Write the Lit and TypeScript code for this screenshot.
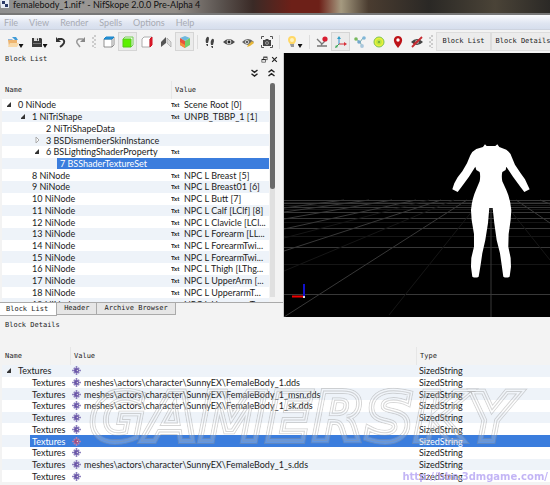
import { LitElement, html, css, svg } from "lit";
import { customElement, property, state } from "lit/decorators.js";
import { classMap } from "lit/directives/class-map.js";

type Glyph = ReturnType<typeof svg>;

const ICONS: Record<string, Glyph> = {
  open: svg`<path d="M1 5V3h4l1 1h3v2z" fill="#8fb4d8"/><path d="M1 4h9v7H2z" fill="#eeb570"/><path d="M3 7h9l-2 4H1z" fill="#f8d9a8"/><path d="M5 1h4l2 3H8z" fill="#3f9bd8"/>`,
  save: svg`<path d="M1 2h9l1 1v8H1z" fill="#3a3a3a"/><path d="M3 2h5v3H3z" fill="#ddd"/><path d="M6 2.500h1v2H6z" fill="#333"/><path d="M2 7h8v1H2z" fill="#777"/>`,
  undo: svg`<path d="M3 3h4q3 1 2 4-1 2-4 4" fill="none" stroke="#333" stroke-width="1.800"/><path d="M1 1v5h5z" fill="#333"/>`,
  redo: svg`<path d="M9 3H5Q2 4 3 7l3 4" fill="none" stroke="#999" stroke-width="1.500"/><path d="M11 1v5H6z" fill="#888"/>`,
  top: svg`<path d="M1 3h8v8H1zM9 3l2-2v8l-2 2" fill="#fff" stroke="#777" stroke-width=".8"/><path d="M1 3l2-2h8L9 3z" fill="#2a96dc" stroke="#1783c8"/>`,
  front: svg`<path d="M1 3l2-2h8v8l-2 2z" fill="#e8ffdf" stroke="#7bc95b"/><path d="M1 3h8v8H1z" fill="#5cf000" stroke="#54c91a"/>`,
  side: svg`<path d="M1 3l2-2h8L9 3v8H1z" fill="#fff" stroke="#999" stroke-width=".8"/><path d="M9 3l2-2v8l-2 2z" fill="#e01b2d" stroke="#d01020"/>`,
  flip: svg`<path d="M1 6l5-5v6l-5 4z" fill="#555"/><path d="M7 2l4 4v5L7 7z" fill="#ddd" stroke="#999" stroke-width=".6"/>`,
  cube: svg`<path d="M6 0l5 2-5 3-5-3z" fill="#6db9df"/><path d="M1 2l5 3v7l-5-3z" fill="#e8523b"/><path d="M11 2L6 5v7l5-3z" fill="#72cf68"/><path d="M1 6l5 3v3l-5-3z" fill="#f4903c"/>`,
  steps: svg`<path d="M3 1q2-1 2 2L4 7H2Q1 3 3 1zM2 8h2v2H3zM8 3q2-1 2 2L9 9H7Q6 5 8 3zM7 10h2v2H8z" fill="#444"/>`,
  eye: svg`<path d="M0 6q6-6 12 0-6 6-12 0z" fill="#4b4b4b"/><circle cx="6" cy="6" r="2.400" fill="#ddd"/><circle cx="6" cy="6" r="1.400" fill="#222"/>`,
  eyeEdit: svg`<path d="M0 6q6-6 12 0-6 6-12 0z" fill="#666"/><circle cx="5" cy="6" r="2" fill="#ddd"/><circle cx="5" cy="6" r="1" fill="#333"/><path d="M6 9l4-4 2 2-4 3-3 1z" fill="#e8b83a"/>`,
  camera: svg`<path d="M.5 3V.5H3M9 .5h2.500V3M11.500 9v2.500H9M3 11.500H.5V9" fill="none" stroke="#555"/><path d="M2 4h2l1-1h2l1 1h2v6H2z" fill="#444"/><circle cx="6" cy="7" r="1.800" fill="#bbb"/><circle cx="6" cy="7" r="1" fill="#444"/>`,
  bulb: svg`<path d="M6 0q4 0 4 4 0 2-2 4H4Q2 6 2 4q0-4 4-4z" fill="#ffd867"/><circle cx="6" cy="4" r="2" fill="#fff3bd"/><path d="M4 8h4v3H5z" fill="#999"/>`,
  angle: svg`<path d="M1 3l5 5M1 10h10M5 9l4-4" fill="none" stroke="#777" stroke-width="1.300"/><circle cx="9" cy="3" r="2.600" fill="#d81e32"/>`,
  axes: svg`<path d="M4 8V2" stroke="#2f8fd6"/><path d="M4 8h6" stroke="#d72f38"/><path d="M4 8l-3 3" stroke="#3aa757"/><path d="M2 3l2-3 2 3z" fill="#2f9fc6"/><path d="M9 6l3 2-3 2z" fill="#d72f38"/><path d="M0 12l1-3 2 2z" fill="#3aa757"/>`,
  nodes: svg`<path d="M2 3l4 3 3-4M6 6l2 4" stroke="#7aa" fill="none"/><circle cx="2" cy="3" r="1.800" fill="#78b95e"/><circle cx="10" cy="2" r="1.800" fill="#7fb6d8"/><circle cx="5" cy="6" r="1.800" fill="#72a8cb"/><circle cx="8" cy="10" r="1.900" fill="#a9c7dc"/>`,
  disc: svg`<circle cx="6" cy="6" r="5" fill="#e8ef3c" stroke="#7cc552"/><circle cx="6" cy="6" r="2.800" fill="#b8e640"/><circle cx="6" cy="6" r=".8" fill="#386b38"/>`,
  pin: svg`<path d="M6 12Q1 6 2 3q1-3 4-3t4 3q1 3-4 9z" fill="#bd1217"/><circle cx="6" cy="4" r="1.700" fill="#fff"/>`,
  hidden: svg`<path d="M0 6q6-6 12 0-6 6-12 0z" fill="#444"/><circle cx="6" cy="6" r="2" fill="#aaa"/><path d="M1 11L11 1" stroke="#c52b32" stroke-width="1.800"/><path d="M2 8l7-5" stroke="#c52b32"/>`,
  down: svg`<path d="M2 2l4 3 4-3M2 7l4 3 4-3" fill="none" stroke="#222" stroke-width="2"/>`,
  up: svg`<path d="M2 5l4-3 4 3M2 10l4-3 4 3" fill="none" stroke="#222" stroke-width="2"/>`,
  float: svg`<path d="M4 1h7v6H4z" fill="#222"/><path d="M5 3h5v3H5z" fill="#f3f3f3"/><path d="M1 5h7v6H1z" fill="#222"/><path d="M2 7h5v3H2z" fill="#f3f3f3"/>`,
  close: svg`<path d="M2 2l8 8M10 2l-8 8" stroke="#222" stroke-width="2"/>`,
};

const icon = (name: string, cls = "icon") =>
  html`<svg class=${cls} viewBox="0 0 12 12" aria-hidden="true">${ICONS[name]}</svg>`;

const sharedStyles = css`
  * { box-sizing: border-box; }
  button { margin: 0; padding: 0; border: 0; background: none; color: inherit; font: inherit; }
  table { display: block; border-spacing: 0; }
  thead { display: block; }
  tbody { display: grid; grid-auto-rows: 1fr; }
  th, td { padding: 0; min-width: 0; font-weight: 400; text-align: left; white-space: nowrap; }
  tr { display: grid; align-items: center; }
  thead tr { height: 18px; }
  th { padding-left: 3px; border-left: 1px solid #e6e6e6; font: 7px/18px "DejaVu Sans Mono", monospace; color: #222; }
  th:first-child { border-left: 0; }
  td { line-height: 11px; }
  tbody tr { background: #fff; }
  .arrow { display: inline-block; width: 13px; vertical-align: top; }
  .arrow svg { display: block; width: 5px; height: 11px; margin-left: 2px; }
`;

interface Block { id: string; type: string; depth: number; value?: string; arrow?: "open" | "closed"; }

const BLOCKS: Block[] = [
  { id: "0", type: "NiNode", depth: 0, value: "Scene Root [0]", arrow: "open" },
  { id: "1", type: "NiTriShape", depth: 1, value: "UNPB_TBBP_1 [1]", arrow: "open" },
  { id: "2", type: "NiTriShapeData", depth: 2 },
  { id: "3", type: "BSDismemberSkinInstance", depth: 2, arrow: "closed" },
  { id: "6", type: "BSLightingShaderProperty", depth: 2, value: "", arrow: "open" },
  { id: "7", type: "BSShaderTextureSet", depth: 3 },
  ...[
    "Breast [5]", "Breast01 [6]", "Butt [7]", "Calf [LClf] [8]", "Clavicle [LCl...", "Forearm [LL...",
    "ForearmTwi...", "ForearmTwi...", "Thigh [LThg...", "UpperArm [...", "UpperarmT...", "UpperarmT...",
  ].map((name, i) => ({ id: String(i + 8), type: "NiNode", depth: 1, value: `NPC L ${name}` })),
];

const arrowGlyph = (kind?: "open" | "closed") => html`<span class="arrow">${
  kind === "open"
    ? html`<svg viewBox="0 0 5 11"><path d="M4 3v5H0V7z" fill="#333"/></svg>`
    : kind === "closed"
      ? html`<svg viewBox="0 0 5 11"><path d="M1 2l3 3-3 3z" fill="#fff" stroke="#aaa"/></svg>`
      : ""
}</span>`;

@customElement("block-list")
export class BlockList extends LitElement {
  @state() private selected = "7";

  static styles = [sharedStyles, css`
    :host { display: flex; flex-direction: column; min-width: 0; background: #f3f3f3; }
    .caption { display: flex; align-items: center; gap: 3px; height: 12px; padding: 0 5px; }
    h2 { flex: 1; margin: 0; font: 7px/12px "DejaVu Sans Mono", monospace; }
    .mini { display: block; width: 7px; height: 7px; }
    .tools { display: flex; justify-content: flex-end; align-items: center; gap: 8px; height: 16px; padding-right: 7px; }
    .tools svg { display: block; width: 9px; height: 10px; }
    .body { display: flex; flex: 1; min-height: 0; }
    table { flex: 1; min-width: 0; overflow: hidden; height: 222px; }
    tbody { height: 211px; }
    tr { grid-template-columns: 169px 1fr; margin-left: 2px; }
    tbody tr:nth-child(even) { background: #eef3f9; }
    td { overflow: hidden; }
    .d1 { padding-left: 14px; }
    .d2 { padding-left: 28px; }
    .d3 { padding-left: 42px; }
    .first { padding-left: 3px; }
    .indent { display: block; }
    tr.selected { background: linear-gradient(90deg, #eef3f9 55px, #3b7ddd 55px) !important; color: #fff; }
    .txt { display: inline-block; width: 13px; font-size: 6px; font-weight: 700; color: #222; vertical-align: top; }
    .scroll { width: 7px; margin: 1px 7px 4px 0; background: #e0e0e0; border: 1px solid #f3f3f3; }
    .thumb { height: 106px; border-radius: 3px; background: #6a6a6a; }
    .tabs { display: flex; height: 15px; border-top: 1px solid #aaa; }
    .tabs button { height: 12px; padding: 0 7px; border: 1px solid #aaa; border-width: 0 1px 1px 0; font: 7px/11px "DejaVu Sans Mono", monospace; background: #e6e6e6; }
    .tabs .active { height: 13px; padding: 0 8px 0 6px; background: #fff; }
  `];

  render() {
    return html`
      <div class="caption"><h2>Block List</h2>
        <button aria-label="Float">${icon("float", "mini")}</button>
        <button aria-label="Close">${icon("close", "mini")}</button>
      </div>
      <div class="tools">
        <button aria-label="Expand all">${icon("down")}</button>
        <button aria-label="Collapse all">${icon("up")}</button>
      </div>
      <div class="body">
        <table>
          <thead><tr><th>Name</th><th>Value</th></tr></thead>
          <tbody>${BLOCKS.map(b => html`
            <tr class=${classMap({ selected: b.id === this.selected })} @click=${() => (this.selected = b.id)}>
              <td class="first"><span class="indent d${b.depth}">${arrowGlyph(b.arrow)}${b.id} ${b.type}</span></td>
              <td>${b.value === undefined ? "" : html`<span class="txt">Txt</span>${b.value}`}</td>
            </tr>`)}</tbody>
        </table>
        <div class="scroll"><div class="thumb"></div></div>
      </div>
      <div class="tabs" role="tablist">
        <button role="tab" class="active" aria-selected="true">Block List</button>
        <button role="tab">Header</button>
        <button role="tab">Archive Browser</button>
      </div>`;
  }
}

@customElement("scene-view")
export class SceneView extends LitElement {
  static styles = css`
    :host { display: block; min-width: 0; background: #000; }
    svg { display: block; width: 100%; height: 100%; }
  `;
  render() {
    return html`<svg viewBox="0 0 266 264" preserveAspectRatio="xMinYMin slice" role="img" aria-label="Body mesh on a ground grid">
      <g fill="none" stroke="#383838">
        <path d="M0 147.500h266M0 150.500h266M0 154.500h266M0 159.500h266M0 165.500h266M0 175.500h266M0 194.500h266M0 241.500h266"/>
        <path stroke="#161616" d="M0 149.500h266M0 152.500h266M0 156.500h266M0 169.500h266M0 183.500h266M0 211.500h266"/>
        <path d="M0 264L183 147M0 198L157 147M0 176L132 147M0 166L108 147M0 159L85 147M0 155L60 147M232 147l34 23M256 147l10 4"/>
        <path stroke="#161616" d="M105 262L197 147M0 218L170 147M0 185L145 147M218 147l48 60"/>
        <path d="M207 147v117"/>
      </g>
      <path transform="translate(1 77) scale(.3333)" fill="#fff" d="M600 43L605 48H631L637 43L643 51L664 59Q676 67 680 80L690 104L706 128L720 148L734 178L718 186L706 170L684 140L664 110L662 120L652 126Q649 138 652 154L664 180Q676 206 679 240L677 270L671 312L670 350L677 384L678 410L674 440Q664 445 655 440L650 404L645 370L635 330L628 280L623 234H613L609 280L601 330L592 370L587 404L581 440Q572 445 562 440L558 410L559 384L567 350L567 312L560 270L558 240Q561 206 573 180L584 154Q587 138 584 126L574 120L571 110L552 140L530 170L518 186L502 178L508 160L518 142L532 124L546 100L556 76Q562 63 574 57L594 51Z"/>
      <path d="M8 243.500h12" stroke="#e00" stroke-width="2"/><path d="M20 231v12" stroke="#11c" stroke-width="2"/><path d="M19 243h2v2h-2z" fill="#ddd"/>
    </svg>`;
  }
}

const TEXTURES = [
  "", "meshes\\actors\\character\\SunnyEX\\FemaleBody_1.dds", "meshes\\actors\\character\\SunnyEX\\FemaleBody_1_msn.dds",
  "meshes\\actors\\character\\SunnyEX\\FemaleBody_1_sk.dds", "", "", "", "",
  "meshes\\actors\\character\\SunnyEX\\FemaleBody_1_s.dds", "",
];

@customElement("block-details")
export class BlockDetails extends LitElement {
  @property({ type: Number }) selected = 6;

  static styles = [sharedStyles, css`
    :host { display: block; position: relative; background: #f3f3f3; overflow: hidden; }
    h2 { margin: 0; height: 30px; padding-left: 5px; font: 7px/17px "DejaVu Sans Mono", monospace; }
    tbody { height: 117px; }
    thead tr { grid-template-columns: 70px 1fr 134px; }
    th:first-child { padding-left: 5px; }
    tbody tr { margin-left: 2px; grid-template-columns: 68px 1fr 134px; }
    tbody tr:nth-child(odd) { background: #eef3f9; }
    tr.selected { background: linear-gradient(90deg, #eef3f9 28px, #3b7ddd 28px) !important; color: #fff; }
    td:first-child { padding-left: 30px; }
    tr:first-child td:first-child { padding-left: 3px; }
    td:last-child { padding-left: 3px; }
    .value { display: flex; align-items: center; gap: 3px; padding-left: 2px; }
    .flower { flex: none; width: 9px; height: 9px; }
    .brand, .site { position: absolute; pointer-events: none; }
    .brand { left: 85px; top: 70px; width: 450px; height: 64px; overflow: visible; }
    .brand text { font: italic 700 68px "DejaVu Sans", sans-serif; }
    .brand use { fill: none; stroke: #fff; stroke-width: 6; }
    .brand .hide { stroke: #000; stroke-width: 4; }
    .brand .core { stroke-width: 1; }
    .brand .haze { stroke-opacity: .2; stroke-width: 4; }
    .brand .ink { stroke: #999; stroke-opacity: .4; }
    .site { right: 2px; bottom: 2px; font: 700 10px/13px "DejaVu Sans", sans-serif; color: #b9a9f4; opacity: .85; text-decoration: none; pointer-events: auto; }
  `];

  render() {
    return html`
      <h2>Block Details</h2>
      <table>
        <thead><tr><th>Name</th><th>Value</th><th>Type</th></tr></thead>
        <tbody>${TEXTURES.map((path, i) => html`
          <tr class=${classMap({ selected: i === this.selected })} @click=${() => (this.selected = i)}>
            <td>${i === 0 ? arrowGlyph("open") : ""}Textures</td>
            <td class="value">
              <svg class="flower" viewBox="0 0 10 10" aria-hidden="true">
                <path d="M5 0v10M0 5h10M2 2l6 6M8 2L2 8" stroke=${i === this.selected ? "#b57fae" : "#8b80bd"} stroke-width="1.800"/>
                <circle cx="5" cy="5" r="2.600" fill=${i === this.selected ? "#9c4d84" : "#6a55a8"}/><circle cx="6" cy="5" r=".8" fill="#ddd"/>
              </svg>${path}</td>
            <td>SizedString</td>
          </tr>`)}</tbody>
      </table>
      <svg class="brand" viewBox="0 0 450 64" aria-hidden="true">
        <defs><text id="name" x="5" y="54">GAMERSKY</text></defs>
        <mask id="rim" maskUnits="userSpaceOnUse" x="-10" y="-10" width="480" height="90">
          <use href="#name"/><use class="hide" href="#name"/><use class="core" href="#name"/>
        </mask>
        <use class="haze" href="#name"/>
        <g mask="url(#rim)"><use class="ink" href="#name"/></g>
      </svg>
      <a class="site" href="http://bbs.3dmgame.com/">http://bbs.3dmgame.com/</a>`;
  }
}

@customElement("app-root")
export class AppRoot extends LitElement {
  static styles = [sharedStyles, css`
    :host { display: flex; flex-direction: column; min-height: 100vh; overflow: hidden; background: #f3f3f3; color: #1c1c1c; font: 9px/11px Lato, "Open Sans", sans-serif; }
    .title { display: flex; align-items: flex-start; gap: 3px; height: 15px; border-bottom: 2px solid #777; color: #111;
      background: linear-gradient(90deg, #8e8e8e 0, #9a9896 12%, #928d88 32%, #5b5450 40%, #3a2a26 46%, #6d2018 53%, #6d2018 58%, #a59a80 62%, #4a3c30 67%, #2a2825 78%, #4a4337 90%, #2b2926 100%); }
    .title svg { width: 10px; height: 9px; }
    h1 { margin: 0; font: 9px/9px Lato, "Open Sans", sans-serif; }
    nav { display: flex; align-items: center; gap: 11px; height: 15px; padding: 0 4px; color: #a8abb3; background: linear-gradient(#fafbfe, #dfe5f1 60%, #d6deed); border-bottom: 1px solid #cdd3df; }
    .toolbar { display: flex; align-items: center; height: 23px; padding: 1px 0 1px 3px; overflow: hidden; }
    .toolbar button { display: flex; flex: none; align-items: center; justify-content: center; width: 19px; height: 19px; border: 1px solid transparent; }
    .toolbar .on { border-color: #d5d5d5; background: #ebebeb; }
    .toolbar .menu { width: 24px; }
    .toolbar .text { width: 55px; border-color: #ddd; background: #ececec; font: 7px/11px "DejaVu Sans Mono", monospace; }
    .toolbar .wide { width: 64px; }
    .icon { width: 12px; height: 12px; }
    .caret { align-self: flex-end; width: 5px; height: 4px; margin-bottom: 2px; background: #111; clip-path: polygon(0 0, 100% 0, 50% 100%); }
    .grip { flex: none; width: 4px; height: 13px; margin: 0 3px; background: repeating-conic-gradient(#ccc 0 25%, #f3f3f3 0 50%) 0 0 / 4px 4px; }
    .sep { flex: none; width: 1px; height: 14px; margin: 0 2px 0 3px; background: #ddd; }
    main { display: grid; grid-template-columns: 284fr 266fr; height: 264px; }
    block-list { min-height: 0; border-right: 1px solid #ccc; }
    block-details { flex: 1; }
  `];

  private tool(name: string, label: string, on = false, menu = false) {
    return html`<button aria-label=${label} class=${classMap({ on, menu })}>${icon(name)}${menu ? html`<span class="caret"></span>` : ""}</button>`;
  }

  render() {
    return html`
      <header class="title">
        <svg viewBox="0 0 10 9" aria-hidden="true"><path d="M0 0h9v8H1z" fill="#e8ecf3"/><path d="M2 1h3v3H2zM5 4h3v3H5z" fill="#2b3a66"/></svg>
        <h1>femalebody_1.nif* - NifSkope 2.0.0 Pre-Alpha 4</h1>
      </header>
      <nav>${["File", "View", "Render", "Spells", "Options", "Help"].map(m => html`<button>${m}</button>`)}</nav>
      <div class="toolbar">
        ${this.tool("open", "Open", false, true)}${this.tool("save", "Save", false, true)}
        ${this.tool("undo", "Undo")}${this.tool("redo", "Redo")}
        <span class="grip"></span>
        ${this.tool("top", "Top view")}${this.tool("front", "Front view", true)}${this.tool("side", "Side view")}
        ${this.tool("flip", "Flip view")}${this.tool("cube", "Perspective", true)}
        <span class="sep"></span>
        ${this.tool("steps", "Walk")}${this.tool("eye", "Show")}${this.tool("eyeEdit", "Edit visibility")}${this.tool("camera", "Screenshot")}
        <span class="sep"></span>
        ${this.tool("bulb", "Lighting", false, true)}
        <span class="sep"></span>
        ${this.tool("angle", "Grid")}${this.tool("axes", "Axes", true)}${this.tool("nodes", "Nodes")}
        ${this.tool("disc", "Collision")}${this.tool("pin", "Markers")}${this.tool("hidden", "Hidden")}
        <span class="grip"></span>
        <button class="text">Block List</button><button class="text wide">Block Details</button>
      </div>
      <main><block-list></block-list><scene-view></scene-view></main>
      <block-details></block-details>`;
  }
}
